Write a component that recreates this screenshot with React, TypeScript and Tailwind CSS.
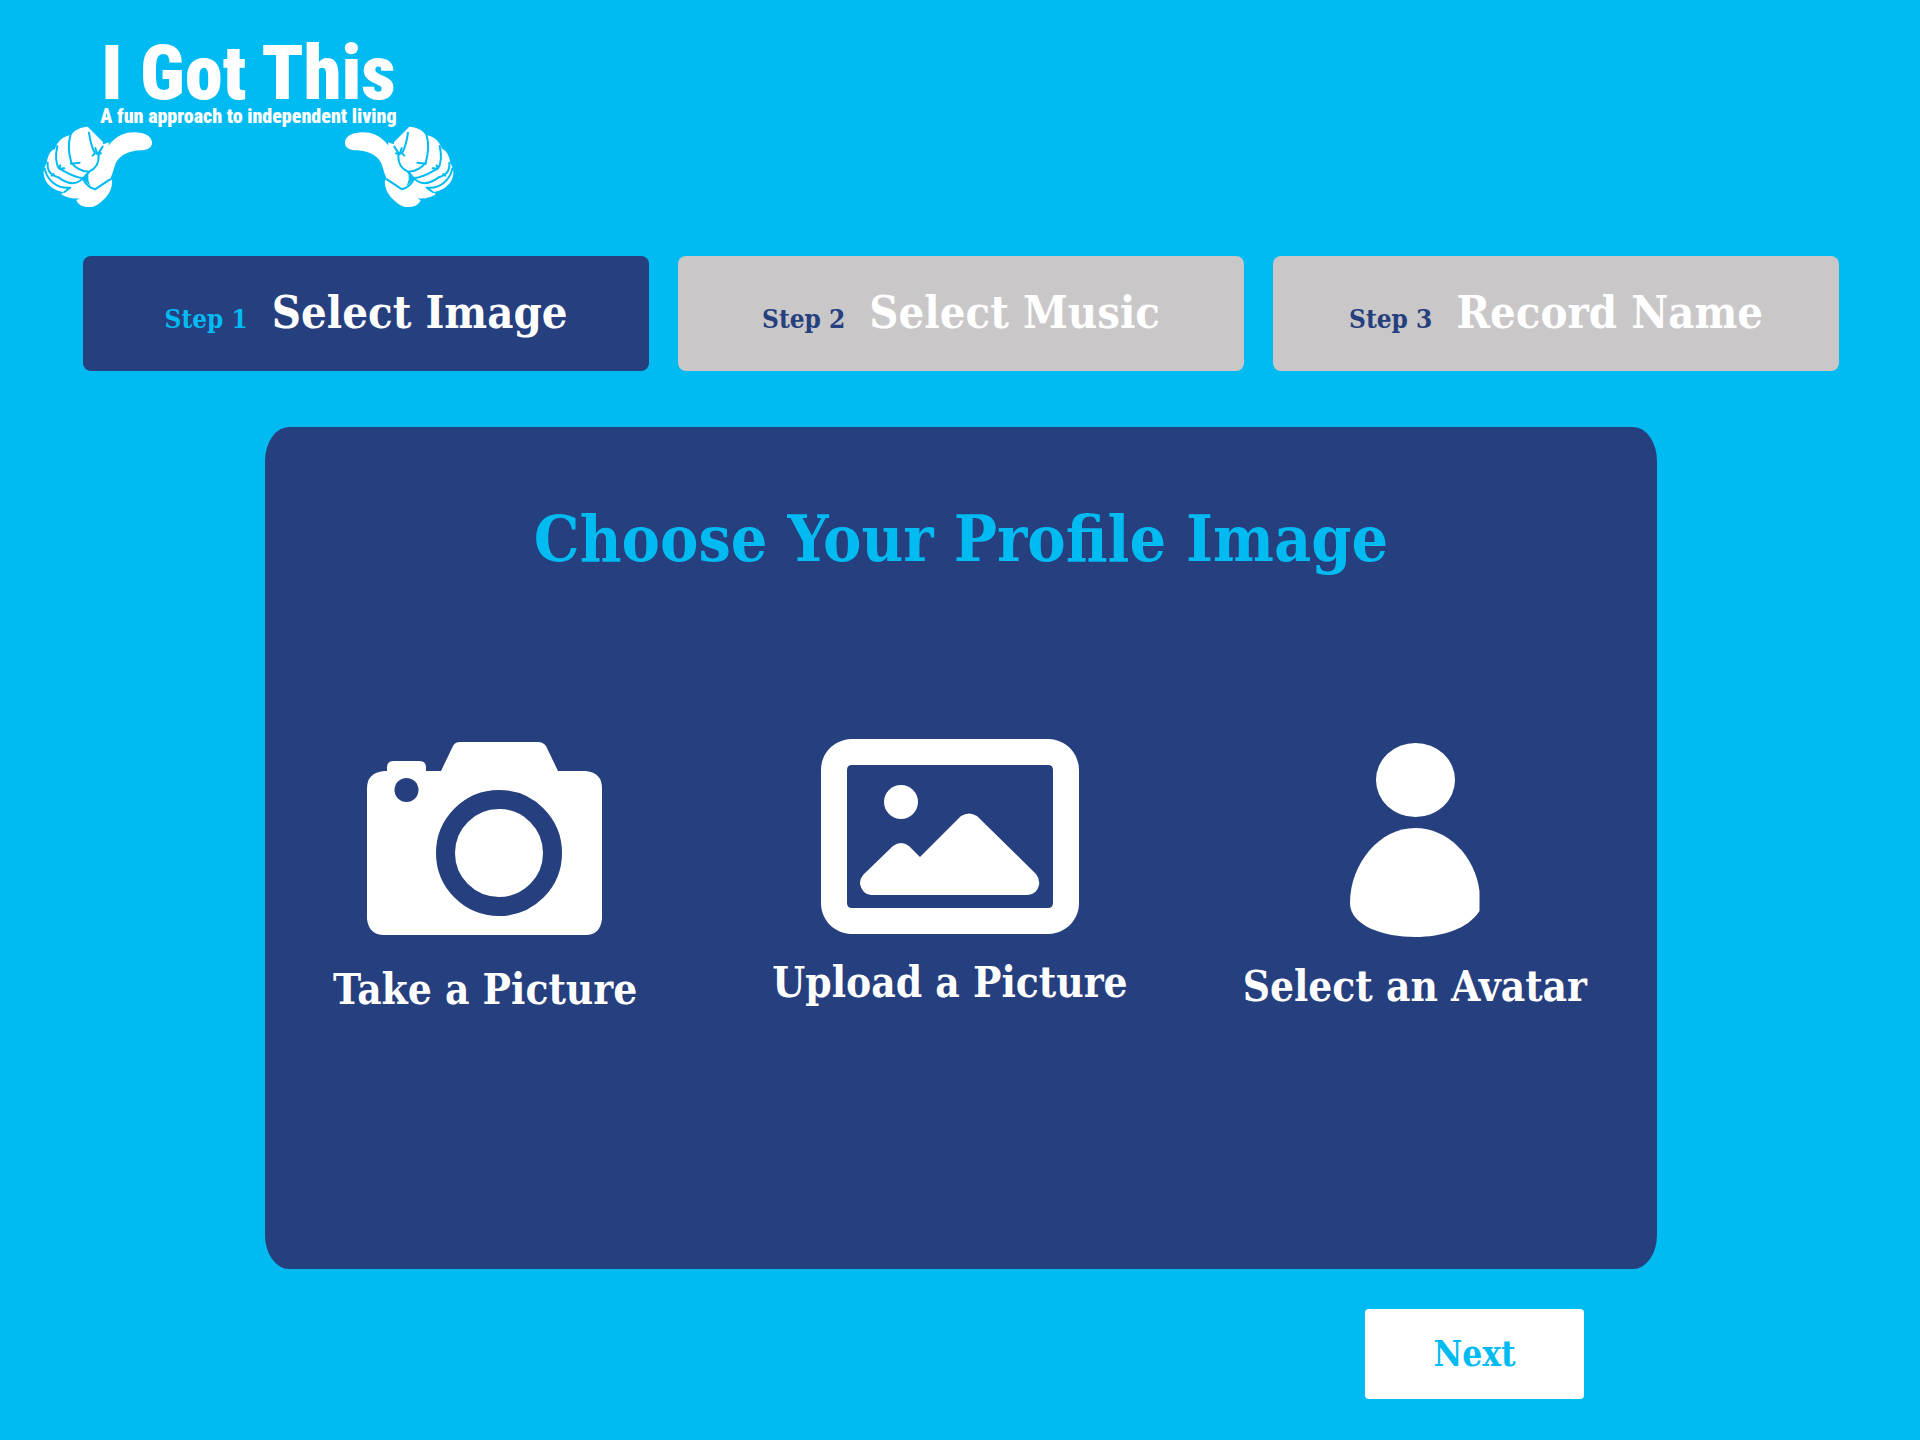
import React from "react";

function Hand({ flipped = false }: { flipped?: boolean }) {
  return (
    <svg viewBox="40 48 330 246" className="h-[82px] w-[110px]" aria-hidden="true">
      <g transform={flipped ? "translate(410 0) scale(-1 1)" : undefined}>
        <path
          fill="#fff"
          d="M125 74C136 58 155 51 174 50L219 95L221 103L238 97L236 107C262 74 290 66 318 67C350 69 368 82 367 100C366 116 350 121 330 121C290 123 268 140 258 160C250 182 248 198 238 213L247 209C250 235 235 258 218 272C200 290 185 292 172 291C155 290 145 282 140 271L150 265C128 268 108 262 94 252L104 247C75 243 50 225 44 202C39 185 44 170 51 160C53 140 62 120 76 117C84 95 98 80 120 76Z"
        />
        <g fill="none" stroke="#00bbf2" strokeWidth="6" strokeLinecap="round" strokeLinejoin="round">
          <path d="M123 72C115 100 117 132 125 158C137 174 154 184 178 185C196 178 208 160 207 136" />
          <path d="M178 68C181 90 186 112 196 130L189 137M197 114L203 133L214 130M206 130L219 110M150 158L124 161" />
          <path d="M83 108C76 140 78 160 88 175C108 186 138 206 162 204L178 186M92 166L88 176L104 175" />
          <path d="M54 158C52 180 62 196 86 202C108 218 132 226 150 213L162 204M72 192L66 197" />
          <path d="M45 176C52 210 82 238 122 233L104 246" />
          <path d="M160 208C168 222 180 234 196 238L240 209" />
        </g>
        <path fill="#00bbf2" d="M158 204L176 184L176 210L182 228Z" />
      </g>
    </svg>
  );
}

function CameraIcon() {
  return (
    <svg viewBox="0 0 236 202" className="h-[202px] w-[236px]" aria-hidden="true">
      <path
        fill="#fff"
        d="M17 32H20V28Q20 22 27 22H52Q59 22 59 28V32H74L86 7Q88 3 93 3H171Q176 3 179 7L191 32H219Q235 34 235 49V180Q233 196 219 196H17Q2 196 0 180V49Q0 34 17 32Z"
      />
      <circle cx="39.500" cy="51" r="12" fill="#263f7e" />
      <circle cx="132" cy="114" r="53.500" fill="none" stroke="#263f7e" strokeWidth="19" />
    </svg>
  );
}

function PictureIcon() {
  return (
    <svg viewBox="0 0 258 195" className="h-[195px] w-[258px]" aria-hidden="true">
      <path
        fill="#fff"
        fillRule="evenodd"
        d="M30 0H228C246 1 258 15 258 31V164C258 180 246 194 228 195H30C12 194 0 180 0 164V31C0 15 12 1 30 0ZM31 26Q26 26 26 31V164Q26 169 31 169H227Q232 169 232 164V31Q232 26 227 26Z"
      />
      <circle cx="80" cy="63" r="17" fill="#fff" />
      <path
        fill="#fff"
        d="M50 156Q41 155 39 145Q39 139 43 135L72 107Q80 101 88 107L99 118L140 77Q148 72 156 77L215 135Q219 140 218 146Q216 155 207 156Z"
      />
    </svg>
  );
}

function AvatarIcon() {
  return (
    <svg viewBox="0 0 130 199" className="h-[199px] w-[130px]" aria-hidden="true">
      <ellipse cx="65.500" cy="41" rx="39.500" ry="37" fill="#fff" />
      <path fill="#fff" d="M0 164C0 124 30 89 65 89C98 89 125 117 129.500 152V172C118 190 92 198 65 198C34 198 0 187 0 164Z" />
    </svg>
  );
}

const steps = [
  { step: "Step 1", name: "Select Image", active: true },
  { step: "Step 2", name: "Select Music", active: false },
  { step: "Step 3", name: "Record Name", active: false },
];

const options = [
  { label: "Take a Picture", Icon: CameraIcon },
  { label: "Upload a Picture", Icon: PictureIcon },
  { label: "Select an Avatar", Icon: AvatarIcon },
];

export default function App() {
  return (
    <div className="min-h-screen bg-[#00bbf2] pb-10 font-['DejaVu_Serif_Condensed','DejaVu_Serif',serif] font-bold text-white">
      <header className="flex h-64 flex-col px-[43px] pt-[38px]">
        <div className="w-[411px]">
          <div className="flex flex-col items-center font-['Roboto_Condensed',Roboto,sans-serif] font-black">
            <h1 className="whitespace-nowrap text-[76px] leading-[70px]">I Got This</h1>
            <p className="whitespace-nowrap text-[20px] leading-4">A fun approach to independent living</p>
          </div>
          <div className="mt-0.5 flex justify-between">
            <Hand />
            <Hand flipped />
          </div>
        </div>
      </header>

      <nav aria-label="Steps" className="grid grid-cols-3 gap-[29px] pl-[83px] pr-[81px]">
        {steps.map(({ step, name, active }) => (
          <button
            key={step}
            type="button"
            aria-current={active ? "step" : undefined}
            className={`flex h-[115px] items-baseline justify-center gap-6 whitespace-nowrap rounded-lg pt-[30px] ${
              active ? "bg-[#263f7e]" : "bg-[#c9c7c8]"
            }`}
          >
            <span className={`text-[26px] leading-[54px] ${active ? "text-[#00bbf2]" : "text-[#263f7e]"}`}>{step}</span>
            <span className="text-[45px] leading-[54px]">{name}</span>
          </button>
        ))}
      </nav>

      <main className="ml-[265px] mr-[263px] mt-14 min-h-[842px] rounded-[24px/34px] bg-[#263f7e] pt-[75px]">
        <h2 className="text-center text-[64px] leading-[74px] text-[#00bbf2]">Choose Your Profile Image</h2>
        <div className="mt-[163px] grid grid-cols-[441fr_490fr_441fr] pr-[22px]">
          {options.map(({ label, Icon }) => (
            <button key={label} type="button" className="flex flex-col items-center gap-[23px] whitespace-nowrap text-[42px] leading-[52px]">
              <Icon />
              <span>{label}</span>
            </button>
          ))}
        </div>
      </main>

      <footer className="mt-10 flex justify-end pr-[336px]">
        <button type="button" className="h-[90px] w-[219px] rounded bg-white text-[35px] text-[#00bbf2]">
          Next
        </button>
      </footer>
    </div>
  );
}
